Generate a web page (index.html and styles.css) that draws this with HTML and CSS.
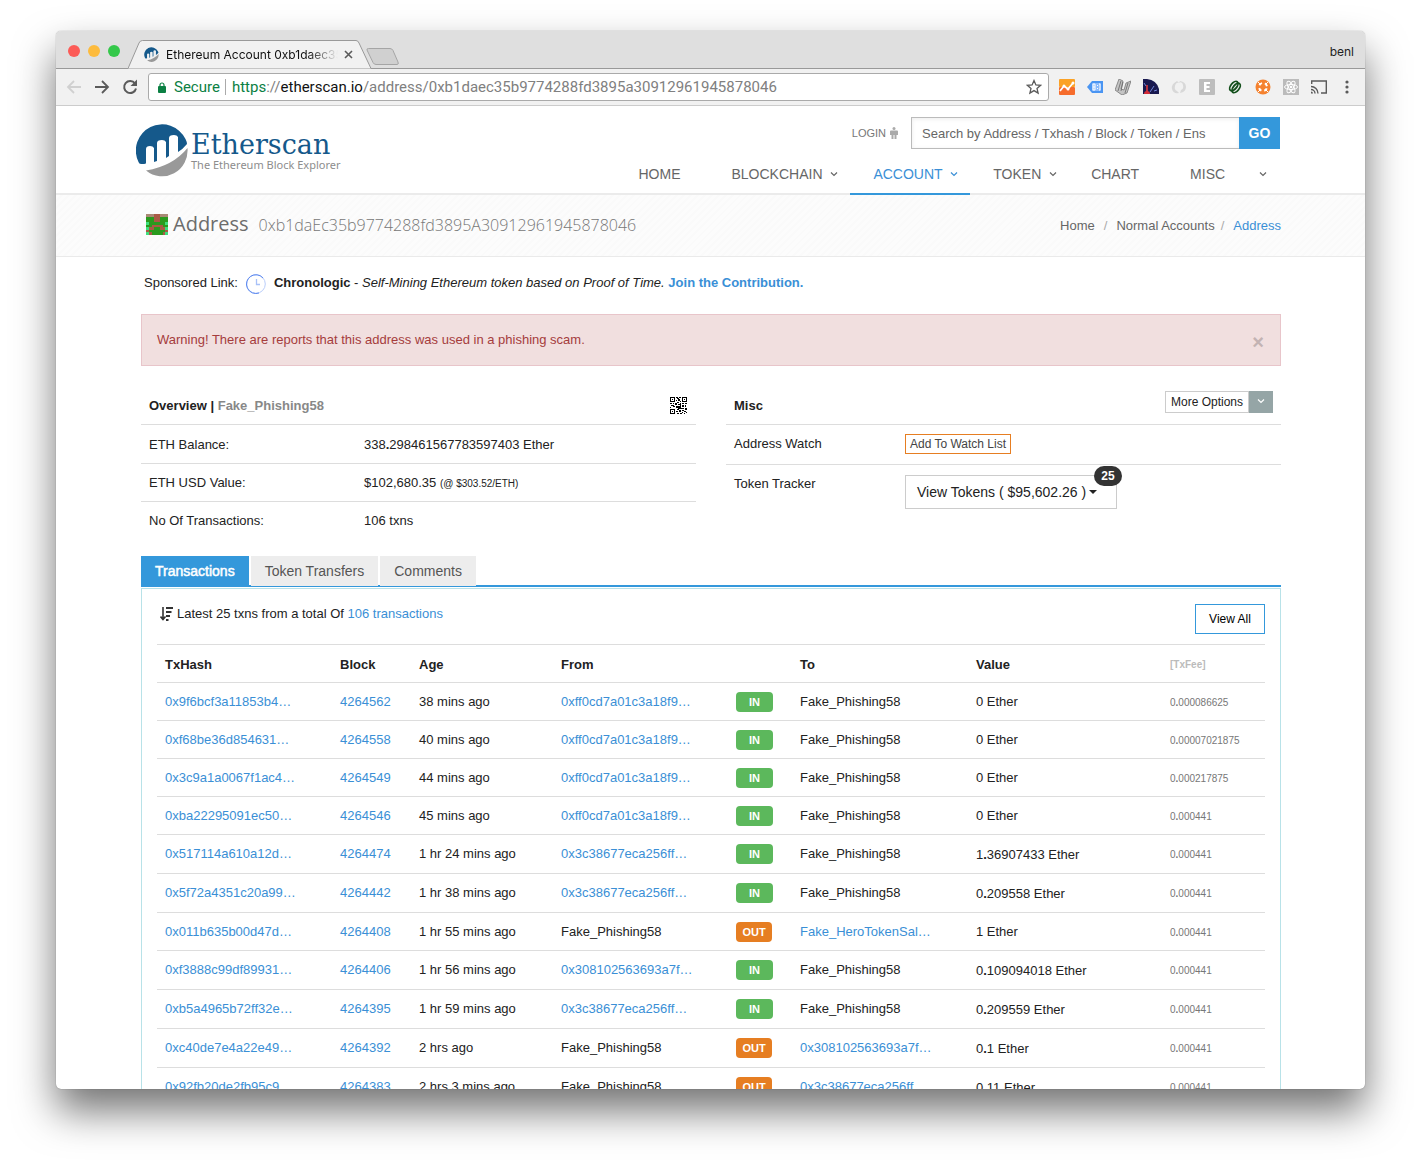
FILE: index.html
```
<!DOCTYPE html>
<html lang="en">
<head>
<meta charset="utf-8">
<title>Ethereum Account 0xb1daec35b9774288fd3895a30912961945878046</title>
<link rel="stylesheet" href="styles.css">
</head>
<body>
<svg class="defs" aria-hidden="true">
  <symbol id="logo" viewBox="0 0 52 54">
    <path fill="#15598b" d="M8 41H5Q3 41 2.500 39A26 26 0 0 1 49.500 16Q51 19 51 21 47 26 42 29V14q-1-2-4-2-5 0-5 3V33l-3 2V19q-1-2-4-2-5 0-5 3V38l-3 1V25q-1-2-4-2-4 0-4 3V40Q10 41 8 41z"/>
    <path fill="#999" d="M10 47.500Q37 43 51.500 25A25.500 26 0 0 1 10 47.500z"/>
  </symbol>
  <symbol id="chevron" viewBox="0 0 8 6"><path d="M1 1.500l3 3 3-3" fill="none" stroke="currentColor" stroke-width="1.200"/></symbol>
</svg>
<div class="window">
  <div class="tabstrip">
    <div class="lights"><i class="red"></i><i class="yellow"></i><i class="green"></i></div>
    <svg class="tab-shape" width="244" height="29" viewBox="0 0 244 29"><path d="M0 28.500L11 3Q12 .5 14.500 .5H228Q230 .5 231 3L243 28.500z" fill="#f1f1f1"/><path d="M0 28.500L11 3Q12 .5 14.500 .5H228Q230 .5 231 3L243 28.500" fill="none" stroke="#999"/></svg>
    <div class="tab">
      <svg class="favicon"><use href="#logo"/></svg>
      <span class="tab-title">Ethereum Account 0xb1daec35</span>
      <svg width="9" height="9" viewBox="0 0 9 9"><path d="M1 1l7 7M8 1L1 8" stroke="#5a5a5a" stroke-width="1.600"/></svg>
    </div>
    <svg class="new-tab" width="34" height="17" viewBox="0 0 34 17"><path d="M2.500 .5H24Q26 .5 27 2.500L32 14Q33 16.500 31 16.500H10Q8 16.500 7 14.500L1 2Q.5.5 2.500.5z" fill="#d0d0d0" stroke="#a5a5a5"/></svg>
    <span class="profile">benl</span>
  </div>
  <div class="toolbar">
    <div class="nav-icons">
      <svg width="16" height="16" viewBox="0 0 16 16"><path d="M15 8H2M8 2L2 8l6 6" fill="none" stroke="#d0d0d0" stroke-width="1.800"/></svg>
      <svg width="16" height="16" viewBox="0 0 16 16"><path d="M1 8h13M8 2l6 6-6 6" fill="none" stroke="#5a5a5a" stroke-width="1.800"/></svg>
      <svg width="16" height="16" viewBox="0 0 16 16"><path d="M13 4.500A6 6 0 1 0 14 9.500" fill="none" stroke="#5a5a5a" stroke-width="2"/><path d="M15 .5V7H8.500z" fill="#5a5a5a"/></svg>
    </div>
    <div class="omnibox">
      <svg width="8" height="11" viewBox="0 0 8 11"><rect y="4" width="8" height="7" rx="1" fill="#0b8043"/><path d="M2 5V3a2 2 0 0 1 4 0v2" fill="none" stroke="#0b8043" stroke-width="1.200"/></svg>
      <span class="secure">Secure</span>
      <span class="url"><b>https</b>://<em>etherscan.io</em>/address/0xb1daec35b9774288fd3895a30912961945878046</span>
      <svg width="16" height="16" viewBox="0 0 16 16"><path d="M8 1.500l1.900 4.400 4.700.4-3.600 3.100 1.100 4.700L8 11.600l-4.100 2.500L5 9.400 1.400 6.300l4.700-.4z" fill="none" stroke="#5a5a5a" stroke-width="1.300"/></svg>
    </div>
    <div class="extensions">
      <svg viewBox="0 0 16 16"><rect width="16" height="8" rx="1" fill="#fba226"/><rect y="8" width="16" height="8" rx="1" fill="#f66c2c"/><path d="M1 12l4-5 4 3 5-6" fill="none" stroke="#fff" stroke-width="1.700"/><circle cx="5" cy="7" r="1.500" fill="#fff"/><circle cx="9" cy="10" r="1.500" fill="#fff"/><circle cx="14" cy="4" r="1.500" fill="#fff"/></svg>
      <svg viewBox="0 0 16 16"><path d="M0 8l5-6h11v12H5z" fill="#4a95f2"/><path d="M5 4h9v8H5z" fill="#8abafc"/><path d="M6 5h2v6H6M8 8H6M12 5h1v6h-1" fill="none" stroke="#fff"/><path d="M10 6h1v1h-1zM10 9h1v1h-1z" fill="#fff"/><path d="M6 5v6" stroke="#fff"/></svg>
      <svg viewBox="0 0 16 16"><path d="M0 11L4 0l4 2-2 8 3 1 2-7 5-2-4 12-5 2z" fill="#c4c4c4" stroke="#777" stroke-width=".8"/><path d="M6 2L3 12M13 4L10 14M8 3L6 12" stroke="#666" stroke-width=".8"/></svg>
      <svg viewBox="0 0 16 16"><path d="M0 0Q13-1 16 10V15H0z" fill="#19194f"/><path d="M7 13L11 7M1 4l2 3M14 11l-3 1" stroke="#7184d8"/><path d="M4 13V6" stroke="#e83a3a" stroke-width="1.500"/><path d="M1 15a3 3 0 0 1 6 0z" fill="#d42c38"/></svg>
      <svg viewBox="0 0 16 16"><path d="M6 2Q0 5 1 10t7 4l-2-2Q3 11 4 7t4-3zM9 2q6 1 6 6t-6 6l1-3q3-1 2-5t-4-2z" fill="#d8d8d8"/></svg>
      <svg viewBox="0 0 16 16"><rect width="16" height="16" rx="1" fill="#bdbdbd"/><path d="M5 3h6v2H7.500v2h3v2h-3v2H11v2H5z" fill="#fff"/></svg>
      <svg viewBox="0 0 16 16"><g fill="none" stroke="#14501c" stroke-width="1.800" transform="rotate(38 8 8)"><ellipse cx="6.500" cy="8" rx="3" ry="5.500"/><ellipse cx="9.500" cy="8" rx="3" ry="5.500"/></g></svg>
      <svg viewBox="0 0 16 16"><circle cx="8" cy="8" r="7.500" fill="#f5822f"/><circle cx="8" cy="8" r="4" fill="none" stroke="#fff" stroke-width="2" stroke-dasharray="3.300 2.983" stroke-dashoffset="-1.500"/><path d="M3 3l2 2M13 3l-2 2M3 13l2-2M13 13l-2-2" stroke="#fff"/></svg>
      <svg viewBox="0 0 16 16"><rect width="16" height="16" fill="#bbb"/><g fill="none" stroke="#fff"><ellipse cx="8" cy="8" rx="6.500" ry="2.500"/><ellipse cx="8" cy="8" rx="6.500" ry="2.500" transform="rotate(60 8 8)"/><ellipse cx="8" cy="8" rx="6.500" ry="2.500" transform="rotate(120 8 8)"/></g><circle cx="8" cy="8" r="1.300" fill="#fff"/></svg>
      <svg viewBox="0 0 16 16"><path d="M.7 5V2h14.600v12H10M0 7.500A7 7 0 0 1 7 14.500M0 10.500a4 4 0 0 1 4 4" fill="none" stroke="#5a5a5a" stroke-width="1.400"/><path d="M0 12.500a2 2 0 0 1 2 2H0z" fill="#5a5a5a"/></svg>
      <svg viewBox="0 0 16 16"><g fill="#5a5a5a"><circle cx="8" cy="3" r="1.600"/><circle cx="8" cy="8" r="1.600"/><circle cx="8" cy="13" r="1.600"/></g></svg>
    </div>
  </div>

  <div class="page">
    <header class="site-header">
      <div class="container header-row">
        <a class="brand" href="#">
          <svg class="brand-mark"><use href="#logo"/></svg>
          <span class="brand-text"><strong>Etherscan</strong><small>The Ethereum Block Explorer</small></span>
        </a>
        <div class="header-side">
          <div class="search-row">
            <a class="login" href="#">LOGIN <svg width="8" height="12" viewBox="0 0 8 12"><circle cx="4" cy="1.500" r="1.500" fill="#aaa"/><path d="M1 3.500h6q1 0 1 1V8H6.500V6v6h-2V8h-1v4h-2V6v2H0V4.500q0-1 1-1z" fill="#aaa"/></svg></a>
            <form class="search">
              <input type="text" aria-label="Search" placeholder="Search by Address / Txhash / Block / Token / Ens">
              <button type="button">GO</button>
            </form>
          </div>
          <nav class="main-nav">
            <a class="home" href="#">HOME</a>
            <a class="blockchain" href="#">BLOCKCHAIN <svg class="chev"><use href="#chevron"/></svg></a>
            <a class="active" href="#">ACCOUNT <svg class="chev"><use href="#chevron"/></svg></a>
            <a class="token" href="#">TOKEN <svg class="chev"><use href="#chevron"/></svg></a>
            <a class="chart" href="#">CHART</a>
            <a class="misc-link" href="#">MISC <svg class="chev"><use href="#chevron"/></svg></a>
          </nav>
        </div>
      </div>
    </header>

    <div class="title-band">
      <div class="container title-row">
        <h1>
          <svg width="22" height="21" viewBox="0 0 8 8" preserveAspectRatio="none" shape-rendering="crispEdges"><path fill="#2a9a1e" d="M0 0h8v8H0z"/><path fill="#a98a75" d="M0 0h8v1H0z"/><path fill="#a95a45" d="M3 0h2v3H3zM2 4h1v1H2zM5 4h1v1H5zM1 5h2v1H1zM5 5h2v1H5zM3 4h2v1H3zM0 6h1v1H0zM7 6h1v1H7zM1 7h1v1H1zM6 7h1v1H6z"/><path fill="#3de07c" d="M0 3h1v1H0zM7 3h1v1H7zM0 5h1v1H0zM7 5h1v1H7zM0 7h1v1H0zM7 7h1v1H7z"/></svg>
          Address <span>0xb1daEc35b9774288fd3895A30912961945878046</span>
        </h1>
        <nav class="crumbs"><a href="#">Home</a><i>/</i><a href="#">Normal Accounts</a><i class="near">/</i><a class="current" href="#">Address</a></nav>
      </div>
    </div>

    <main class="container">
      <p class="sponsor">Sponsored Link:
        <svg width="20" height="20" viewBox="0 0 20 20"><circle cx="10" cy="10" r="9.300" fill="none" stroke="#b9cdfa"/><path d="M13 19A9.400 9.400 0 1 1 17 4" fill="none" stroke="#5a87ee"/><path d="M10.500 5v5.500H14" fill="none" stroke="#a9c1f8" stroke-width="1.300"/></svg>
        <span><b>Chronologic</b> - <em>Self-Mining Ethereum token based on Proof of Time.</em> <a href="#">Join the Contribution.</a></span>
      </p>
      <div class="alert">Warning! There are reports that this address was used in a phishing scam. <button type="button" aria-label="Close">×</button></div>

      <div class="panels">
        <table class="info overview">
          <thead><tr><th colspan="2"><div class="info-head"><span>Overview | <span class="muted">Fake_Phishing58</span></span>
            <svg width="17" height="17" viewBox="0 0 17 17" shape-rendering="crispEdges"><path d="M0 0h5v5H0zM12 0h5v5h-5zM0 12h5v5H0z"/><path fill="#fff" d="M1 1h3v3H1zM13 1h3v3h-3zM1 13h3v3H1z"/><path d="M2 2h1v1H2zM14 2h1v1h-1zM2 14h1v1H2zM6 0h2v1H6zM9 0h2v1H9zM7 1h2v1H7zM6 3h1v1H6zM8 2h2v2H8zM10 4h1v1h-1zM7 5h2v1H7zM0 6h2v1H0zM3 6h1v1H3zM5 6h2v2H5zM8 7h3v1H8zM10 6h1v3h-1zM12 6h2v1h-2zM15 6h2v1h-2zM1 8h3v1H1zM0 10h1v1H0zM3 9h2v1H3zM6 9h3v2H6zM9 9h2v2H9zM12 8h2v2h-2zM15 8h1v2h-1zM8 11h3v1H8zM11 11h3v1h-3zM15 11h2v2h-2zM7 12h2v1H7zM6 14h2v1H6zM9 13h2v2H9zM12 13h2v1h-2zM14 14h2v1h-2zM7 16h2v1H7zM10 16h2v1h-2zM12 15h1v1h-1zM14 16h1v1h-1zM16 15h1v1h-1z"/></svg></div></th></tr></thead>
          <tbody>
            <tr class="balance"><td>ETH Balance:</td><td>338<b>.</b>298461567783597403 Ether</td></tr>
            <tr><td>ETH USD Value:</td><td>$102,680.35 <small>(@ $303.52/ETH)</small></td></tr>
            <tr><td>No Of Transactions:</td><td>106 txns</td></tr>
          </tbody>
        </table>
        <table class="info misc">
          <thead><tr><th colspan="2"><div class="info-head"><span>Misc</span>
            <div class="more"><button type="button">More Options</button><button type="button" class="more-toggle" aria-label="Toggle"><svg class="chev"><use href="#chevron"/></svg></button></div></div></th></tr></thead>
          <tbody>
            <tr><td>Address Watch</td><td><button type="button" class="watch">Add To Watch List</button></td></tr>
            <tr><td class="top">Token Tracker</td><td class="token-cell"><button type="button" class="tokens">View Tokens ( $95,602.26 ) <i class="caret"></i><span class="count">25</span></button></td></tr>
          </tbody>
        </table>
      </div>

      <div class="tabs">
        <button type="button" class="on">Transactions</button><button type="button">Token Transfers</button><button type="button">Comments</button>
      </div>
      <section class="tx-panel">
        <div class="tx-top">
          <p><svg width="13" height="14" viewBox="0 0 13 14"><path d="M3 0v12M.5 9.500L3 12.500l2.500-3" fill="none" stroke="#333" stroke-width="1.600"/><path d="M6 0h7v2H6zM6 4h5.500v2H6zM6 8h4v2H6zM6 12h2.500v2H6z" fill="#333"/></svg><span>Latest 25 txns from a total Of <a href="#">106 transactions</a></span></p>
          <button type="button" class="view-all">View All</button>
        </div>
        <table class="tx">
          <colgroup><col class="c-hash"><col class="c-block"><col class="c-age"><col class="c-from"><col class="c-dir"><col class="c-to"><col class="c-value"><col></colgroup>
          <thead><tr><th>TxHash</th><th>Block</th><th>Age</th><th>From</th><th></th><th>To</th><th>Value</th><th class="fee">[TxFee]</th></tr></thead>
          <tbody>
            <tr><td><a href="#">0x9f6bcf3a11853b4…</a></td><td><a href="#">4264562</a></td><td>38 mins ago</td><td><a href="#">0xff0cd7a01c3a18f9…</a></td><td><span class="in">IN</span></td><td>Fake_Phishing58</td><td>0 Ether</td><td class="fee">0<b>.</b>000086625</td></tr>
            <tr><td><a href="#">0xf68be36d854631…</a></td><td><a href="#">4264558</a></td><td>40 mins ago</td><td><a href="#">0xff0cd7a01c3a18f9…</a></td><td><span class="in">IN</span></td><td>Fake_Phishing58</td><td>0 Ether</td><td class="fee">0<b>.</b>00007021875</td></tr>
            <tr><td><a href="#">0x3c9a1a0067f1ac4…</a></td><td><a href="#">4264549</a></td><td>44 mins ago</td><td><a href="#">0xff0cd7a01c3a18f9…</a></td><td><span class="in">IN</span></td><td>Fake_Phishing58</td><td>0 Ether</td><td class="fee">0<b>.</b>000217875</td></tr>
            <tr><td><a href="#">0xba22295091ec50…</a></td><td><a href="#">4264546</a></td><td>45 mins ago</td><td><a href="#">0xff0cd7a01c3a18f9…</a></td><td><span class="in">IN</span></td><td>Fake_Phishing58</td><td>0 Ether</td><td class="fee">0<b>.</b>000441</td></tr>
            <tr class="fraction"><td><a href="#">0x517114a610a12d…</a></td><td><a href="#">4264474</a></td><td>1 hr 24 mins ago</td><td><a href="#">0x3c38677eca256ff…</a></td><td><span class="in">IN</span></td><td>Fake_Phishing58</td><td class="amount">1<b>.</b>36907433 Ether</td><td class="fee">0<b>.</b>000441</td></tr>
            <tr class="fraction"><td><a href="#">0x5f72a4351c20a99…</a></td><td><a href="#">4264442</a></td><td>1 hr 38 mins ago</td><td><a href="#">0x3c38677eca256ff…</a></td><td><span class="in">IN</span></td><td>Fake_Phishing58</td><td class="amount">0<b>.</b>209558 Ether</td><td class="fee">0<b>.</b>000441</td></tr>
            <tr><td><a href="#">0x011b635b00d47d…</a></td><td><a href="#">4264408</a></td><td>1 hr 55 mins ago</td><td>Fake_Phishing58</td><td><span class="out">OUT</span></td><td><a href="#">Fake_HeroTokenSal…</a></td><td>1 Ether</td><td class="fee">0<b>.</b>000441</td></tr>
            <tr class="fraction"><td><a href="#">0xf3888c99df89931…</a></td><td><a href="#">4264406</a></td><td>1 hr 56 mins ago</td><td><a href="#">0x308102563693a7f…</a></td><td><span class="in">IN</span></td><td>Fake_Phishing58</td><td class="amount">0<b>.</b>109094018 Ether</td><td class="fee">0<b>.</b>000441</td></tr>
            <tr class="fraction"><td><a href="#">0xb5a4965b72ff32e…</a></td><td><a href="#">4264395</a></td><td>1 hr 59 mins ago</td><td><a href="#">0x3c38677eca256ff…</a></td><td><span class="in">IN</span></td><td>Fake_Phishing58</td><td class="amount">0<b>.</b>209559 Ether</td><td class="fee">0<b>.</b>000441</td></tr>
            <tr class="fraction"><td><a href="#">0xc40de7e4a22e49…</a></td><td><a href="#">4264392</a></td><td>2 hrs ago</td><td>Fake_Phishing58</td><td><span class="out">OUT</span></td><td><a href="#">0x308102563693a7f…</a></td><td class="amount">0<b>.</b>1 Ether</td><td class="fee">0<b>.</b>000441</td></tr>
            <tr class="fraction"><td><a href="#">0x92fb20de2fb95c9…</a></td><td><a href="#">4264383</a></td><td>2 hrs 3 mins ago</td><td>Fake_Phishing58</td><td><span class="out">OUT</span></td><td><a href="#">0x3c38677eca256ff…</a></td><td class="amount">0<b>.</b>11 Ether</td><td class="fee">0<b>.</b>000441</td></tr>
          </tbody>
        </table>
      </section>
    </main>
  </div>
</div>
</body>
</html>
```
FILE: styles.css
```
* { box-sizing: border-box; }
body {
  margin: 0;
  height: 100vh;
  padding: 31px 56px 80px;
  overflow: hidden;
  background: #fff;
  color: #222;
  font: 13px/20px "Liberation Sans", Arial, sans-serif;
}
a { color: #3a8fd6; text-decoration: none; }
button { font: inherit; color: inherit; margin: 0; border-radius: 0; }
svg { flex: none; }
p { margin: 0; }
.defs { position: absolute; width: 0; height: 0; }
.window {
  height: 100%;
  display: flex;
  flex-direction: column;
  overflow: hidden;
  border-radius: 5px;
  background: #fff;
  box-shadow: 0 0 1px rgba(0,0,0,.5), 0 22px 40px rgba(0,0,0,.55);
}

/* Browser chrome */
.tabstrip {
  position: relative;
  flex: none;
  display: flex;
  height: 38px;
  background: #dfdfdf;
  border-bottom: 1px solid #999;
  font: 12px/16px Inter, sans-serif;
}
.lights { display: flex; gap: 8px; padding: 14px 0 0 12px; }
.lights i { width: 12px; height: 12px; border-radius: 50%; }
.red { background: #fc5b57; }
.yellow { background: #fdbb3d; }
.green { background: #34c84a; }
.tab-shape { position: absolute; left: 72px; top: 9px; }
.tab {
  position: relative;
  display: flex;
  align-items: center;
  width: 210px;
  height: 29px;
  margin: 9px 0 0 24px;
}
.favicon { width: 15px; height: 15px; }
.tab-title {
  width: 172px;
  margin: 0 6px 0 7px;
  overflow: hidden;
  white-space: nowrap;
  color: #111;
  -webkit-mask-image: linear-gradient(to right, #000 142px, transparent);
  mask-image: linear-gradient(to right, #000 142px, transparent);
}
.new-tab { margin: 17px 0 0 12px; }
.profile { margin: 13px 11px 0 auto; color: #222; }
.toolbar {
  flex: none;
  display: flex;
  align-items: center;
  height: 37px;
  padding: 0 10px;
  background: #f1f1f1;
  border-bottom: 1px solid #ccc;
}
.nav-icons { display: flex; gap: 12px; width: 82px; }
.omnibox {
  flex: 1;
  display: flex;
  align-items: center;
  height: 28px;
  padding: 0 6px 0 9px;
  background: #fff;
  border: 1px solid #aaa;
  border-radius: 3px;
  font: 15px/20px Roboto, sans-serif;
}
.secure { margin: 0 5px 0 8px; color: #0b8043; }
.url { flex: 1; padding-left: 6px; line-height: 16px; border-left: 1px solid #aaa; color: #808080; }
.url b { font-weight: 400; color: #0b8043; }
.url em { font-style: normal; color: #111; }
.extensions { display: flex; gap: 12px; margin-left: 10px; }
.extensions svg { width: 16px; height: 16px; }

/* Site header */
.page { flex: 1; min-height: 0; overflow: hidden; }
.container { margin: 0 84px 0 85px; }
.site-header { height: 89px; border-bottom: 2px solid #ebebeb; }
.header-row { display: flex; justify-content: space-between; }
.brand { display: flex; height: 72px; margin-left: -5px; padding-top: 17px; gap: 3px; }
.brand-mark { width: 52px; height: 54px; }
.brand-text { display: flex; flex-direction: column; padding-top: 8px; }
.brand-text strong { font: 27px/28px "DejaVu Serif", serif; color: #15598b; }
.brand-text small { font: 11px/12px "Noto Sans", sans-serif; color: #8d8d8d; }
.header-side { display: flex; flex-direction: column; align-items: flex-end; }
.search-row { display: flex; align-items: center; gap: 13px; padding-top: 11px; margin-right: 1px; }
.login { font-size: 11px; color: #777; display: flex; align-items: center; gap: 4px; }
.search { display: flex; }
.search input {
  width: 328px;
  height: 32px;
  padding: 0 10px;
  border: 1px solid #bbb;
  border-right: 0;
  border-radius: 0;
  box-shadow: inset 0 1px 4px rgba(0,0,0,.08);
  font: inherit;
}
.search input::placeholder { color: #666; opacity: 1; }
.search button { width: 41px; padding: 0; border: 0; background: #3498db; color: #fff; font-weight: 700; font-size: 14px; }
.main-nav { display: flex; font-size: 14px; line-height: 20px; }
.main-nav a { color: #666; height: 46px; padding: 15px 0 0; white-space: nowrap; }
.chev { width: 8px; height: 6px; margin-left: 4px; vertical-align: 2px; }
.main-nav .home { margin-right: 51px; }
.main-nav .blockchain { margin-right: 12px; }
.main-nav .active { color: #3a8fd6; border-bottom: 2px solid #3498db; padding: 15px 12px 0 23px; margin-right: 23px; }
.main-nav .token { margin-right: 34px; }
.main-nav .chart { margin-right: 51px; }
.main-nav .misc-link { margin-right: 14px; }
.misc-link .chev { margin-left: 30px; }

.title-band {
  height: 62px;
  border-bottom: 1px solid #eaeaea;
  background: repeating-linear-gradient(135deg, #fcfcfc 0 3px, #fafafa 3px 5px);
}
.title-row { display: flex; justify-content: space-between; }
h1 { display: flex; align-items: center; height: 58px; margin: 0 0 0 5px; gap: 5px; font: 20px/28px "Open Sans", sans-serif; color: #6c6c6c; }
h1 span { font-size: 16px; font-weight: 300; margin: 2px 0 0 5px; color: #777; }
.crumbs { padding-top: 21px; color: #aaa; }
.crumbs a { color: #666; }
.crumbs a.current { color: #3a8fd6; }
.crumbs i { font-style: normal; margin: 0 9px; }
.crumbs .near { margin-left: 6px; }

/* Notices */
.sponsor { display: flex; align-items: center; gap: 8px; height: 20px; margin: 16px 3px 0; }
.sponsor svg { margin-top: 2px; }
.sponsor a { font-weight: 700; }
.alert {
  display: flex;
  justify-content: space-between;
  align-items: center;
  height: 52px;
  margin-top: 21px;
  padding: 0 16px 0 15px;
  border: 1px solid #e8c5ca;
  background: #f1dfdf;
  color: #a53c3c;
}
.alert button { padding: 4px 0 0; border: 0; background: none; font-size: 20px; font-weight: 700; color: #c3b3b3; }

/* Overview and misc tables */
.panels { display: grid; grid-template-columns: 1fr 1fr; gap: 30px; margin-top: 20px; align-items: start; }
.info { width: 100%; border-collapse: collapse; }
.info th { height: 38px; padding: 2px 8px 0; text-align: left; }
.info td { height: 38px; padding: 0 8px; border-top: 1px solid #ddd; }
.overview td { padding-top: 2px; }
.info .balance td { height: 39px; }
.info-head { display: flex; justify-content: space-between; align-items: center; }
.info-head .muted { color: #888; }
.overview td:first-child { width: 215px; }
.overview th { padding-right: 9px; }
.info small { font-size: 10px; }
.misc td { height: 40px; }
.misc td:first-child { width: 171px; }
.more { display: flex; height: 22px; margin-top: -8px; font-size: 12px; font-weight: 400; line-height: 18px; }
.more button { padding: 0 5px; border: 1px solid #ccc; background: #fff; }
.more .more-toggle { width: 24px; border: 0; background: #95a5a6; color: #fff; }
.more .chev { margin: 0; }
.watch { height: 20px; padding: 0 4px; border: 1px solid #e67e22; background: #fff; font-size: 12px; line-height: 16px; color: #444; }
.info td.top { padding-top: 9px; vertical-align: top; }
.info td.token-cell { padding-top: 10px; }
.tokens { position: relative; display: flex; align-items: center; width: 212px; height: 34px; padding: 0 11px; border: 1px solid #ccc; background: #fff; font-size: 14px; }
.caret { margin-left: 3px; border: 4px solid transparent; border-top-color: #222; border-bottom: 0; }
.count { position: absolute; right: -6px; top: -10px; width: 28px; height: 20px; border-radius: 10px; background: #333; color: #fff; font-size: 12px; font-weight: 700; line-height: 20px; }

/* Transactions */
.tabs { display: flex; gap: 2px; height: 31px; margin-top: 17px; border-bottom: 2px solid #3498db; }
.tabs button { height: 30px; padding: 0 14px; border: 0; background: #ededed; font-size: 14px; color: #555; }
.tabs .on { height: 31px; padding-bottom: 1px; background: #3498db; color: #fff; -webkit-text-stroke: 0.5px #fff; }
.tx-panel { margin-top: 1px; padding: 0 15px; border: 1px solid #b8e2e8; }
.tx-top { display: flex; justify-content: space-between; height: 55px; padding-top: 15px; }
.tx-top p { display: flex; gap: 4px; padding-left: 3px; }
.tx-top p svg { margin-top: 3px; }
.view-all { width: 70px; height: 30px; padding: 0; border: 1px solid #3498db; background: #fff; color: #000; font-size: 12px; }
.tx { width: 100%; border-collapse: collapse; table-layout: fixed; }
.tx th, .tx td { height: 38px; padding: 0 8px; border-top: 1px solid #ddd; text-align: left; white-space: nowrap; }
.tx th { padding-top: 2px; }
.tx .fraction td { height: 39px; }
.tx .fraction .amount { padding-top: 2px; }
.c-hash { width: 175px; }
.c-block { width: 79px; }
.c-age { width: 142px; }
.c-from { width: 175px; }
.c-dir { width: 64px; }
.c-to { width: 176px; }
.c-value { width: 194px; }
.tx .fee { padding-top: 2px; font-size: 10px; color: #777; }
.tx th.fee { color: #bbb; }
.in, .out { display: block; width: 37px; height: 20px; border-radius: 4px; background: #5cb85c; color: #fff; font-size: 11px; font-weight: 700; line-height: 20px; text-align: center; }
.out { background: #e67e22; width: 36px; }
```
